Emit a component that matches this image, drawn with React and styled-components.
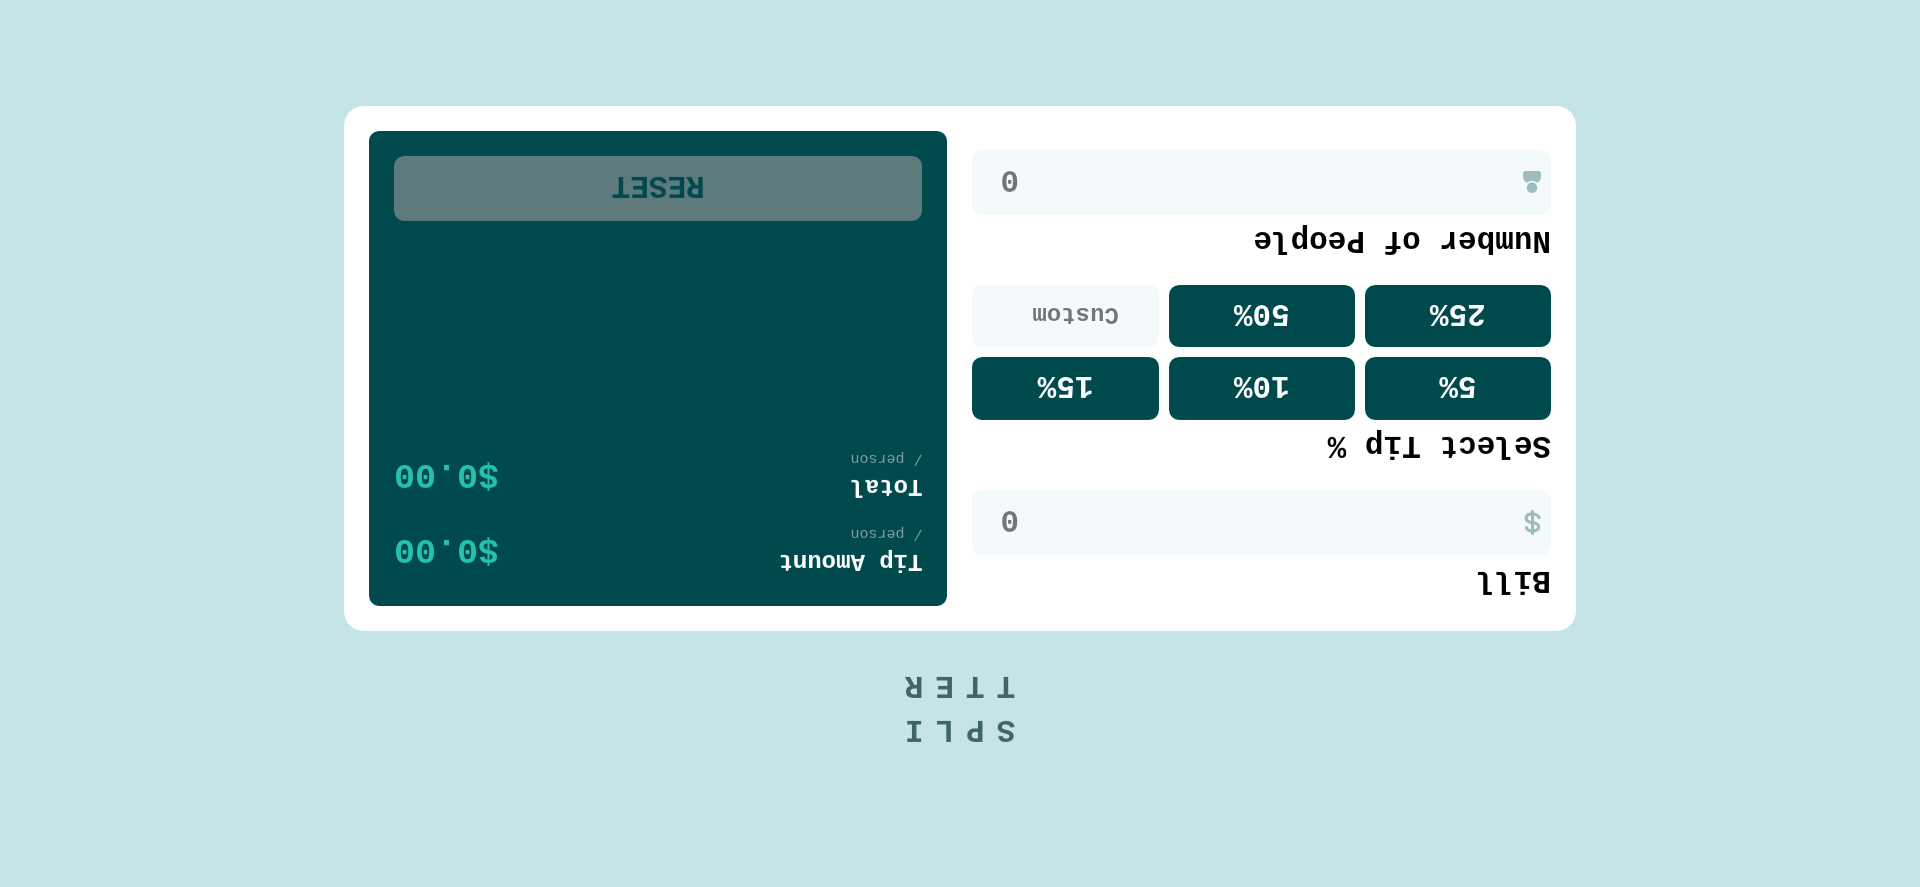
import React, { useState } from "react";
import styled, { createGlobalStyle } from "styled-components";

const GlobalStyle = createGlobalStyle`
  *, *::before, *::after { box-sizing: border-box; }
  body {
    margin: 0;
    background: #c5e4e7;
    font-family: "Liberation Mono", monospace;
    font-weight: 700;
  }
  button, input { font: inherit; }
`;

const Page = styled.main`
  min-height: 100vh;
  display: flex;
  flex-direction: column;
  align-items: center;
  justify-content: center;
  transform: rotate(180deg);
`;

const Logo = styled.h1`
  display: flex;
  flex-direction: column;
  margin: 0;
  padding: 30px 0 32px 12px;
  font-size: 31px;
  line-height: 44px;
  letter-spacing: 12px;
  color: #3d6666;
`;

const Card = styled.section`
  width: calc(100% - 48px);
  max-width: 1232px;
  display: grid;
  grid-template-columns: repeat(auto-fit, minmax(min(100%, 400px), 1fr));
  gap: 25px;
  padding: 25px;
  border-radius: 20px;
  background: #fff;
`;

const Form = styled.form`
  display: flex;
  flex-direction: column;
  gap: 19px;
  padding-bottom: 19px;
`;

const Field = styled.div`
  display: flex;
  flex-direction: column;
`;

const TipGroup = styled.fieldset`
  min-width: 0;
  margin: 0;
  padding: 0;
  border: 0;
`;

const Label = styled.label`
  display: block;
  padding: 4px 0 3px;
  font-size: 31px;
  line-height: 44px;
  color: #000;
`;

const InputBox = styled.div`
  display: flex;
  align-items: center;
  height: 65px;
  padding-left: 10px;
  border-radius: 10px;
  background: #f4fafc;

  &:focus-within { outline: 2px solid #26c0ab; }
`;

const NumberInput = styled.input`
  flex: 1;
  min-width: 0;
  height: 100%;
  padding: 6px 28px 0 0;
  border: 0;
  outline: 0;
  background: transparent;
  color: #00494d;
  font-size: 31px;
  text-align: right;

  &::placeholder { color: #757575; opacity: 1; }
`;

const TipGrid = styled.div`
  display: grid;
  grid-template-columns: repeat(3, minmax(0, 1fr));
  grid-auto-rows: 1fr;
  gap: 10px;
  min-height: 135px;
`;

const TipButton = styled.button`
  padding: 6px 0 0;
  border: 0;
  border-radius: 10px;
  background: ${({ $active }) => ($active ? "#26c0ab" : "#00494d")};
  color: #fff;
  font-size: 31px;
  cursor: pointer;
`;

const CustomInput = styled.input`
  width: 100%;
  padding: 4px 20px 0 0;
  border: 0;
  border-radius: 10px;
  background: #f4fafc;
  color: #00494d;
  font-size: 24px;
  text-align: center;

  &::placeholder { color: #757575; opacity: 1; }
`;

const Panel = styled.div`
  display: flex;
  flex-direction: column;
  gap: 15px;
  padding: 25px;
  border-radius: 10px;
  background: #00494d;
`;

const ResultRow = styled.div`
  display: flex;
  align-items: center;
  justify-content: space-between;
  padding-top: 3px;
`;

const ResultName = styled.div`
  font-size: 24px;
  line-height: 33px;
  color: #fff;
`;

const PerPerson = styled.div`
  font-size: 15px;
  font-weight: 400;
  line-height: 24px;
  color: #7f9c9f;
`;

const Amount = styled.output`
  font-size: 35px;
  line-height: 52px;
  color: #26c0ab;
`;

const ResetButton = styled.button`
  height: 65px;
  margin-top: auto;
  padding: 6px 0 0;
  border: 0;
  border-radius: 10px;
  background: ${({ disabled }) => (disabled ? "#5f7a7d" : "#26c0ab")};
  color: #00494d;
  font-size: 31px;
`;

const DollarIcon = () => (
  <svg width="17" height="25" viewBox="0 0 17 25" fill="none" stroke="#9ebbbd" aria-hidden="true">
    <path d="M8.5 0.3V24.7" strokeWidth="3" />
    <path
      d="M14.6 8.4V7.9C14.6 5.4 12.2 4 8.5 4S2.2 5.6 2.2 8.1C2.2 10.9 4.5 11.7 8.5 12.3S14.9 13.9 14.9 16.7C14.9 19.4 12.4 21 8.5 21S1.9 19.2 1.9 16.6V16"
      strokeWidth="3.1"
    />
  </svg>
);

const PersonIcon = () => (
  <svg width="18" height="22" viewBox="0 0 18 22" fill="#9ebbbd" aria-hidden="true">
    <circle cx="9" cy="5.3" r="5.3" />
    <path d="M4.2 10.2A6.8 6.8 0 0 0 13.8 10.2C16.6 11.2 18 13.6 18 16.8V19C18 21.1 17.1 22 15 22H3C.9 22 0 21.1 0 19V16.8C0 13.6 1.4 11.2 4.2 10.2Z" />
  </svg>
);

const TIPS = [5, 10, 15, 25, 50];

export default function App() {
  const [bill, setBill] = useState("");
  const [people, setPeople] = useState("");
  const [tip, setTip] = useState(null);
  const [custom, setCustom] = useState("");

  const rate = (custom ? Number(custom) : tip || 0) / 100;
  const count = Number(people);
  const base = count > 0 ? Number(bill) / count : 0;
  const money = (value) => `$${(Number.isFinite(value) ? value : 0).toFixed(2)}`;
  const untouched = !bill && !people && !custom && tip === null;

  const reset = () => {
    setBill("");
    setPeople("");
    setTip(null);
    setCustom("");
  };

  return (
    <>
      <GlobalStyle />
      <Page>
        <Logo>
          <span>SPLI</span>
          <span>TTER</span>
        </Logo>
        <Card>
          <Form onSubmit={(e) => e.preventDefault()}>
            <Field>
              <Label htmlFor="bill">Bill</Label>
              <InputBox>
                <DollarIcon />
                <NumberInput id="bill" inputMode="decimal" placeholder="0" value={bill} onChange={(e) => setBill(e.target.value)} />
              </InputBox>
            </Field>
            <TipGroup aria-labelledby="tip-label">
              <Label as="div" id="tip-label">Select Tip %</Label>
              <TipGrid>
                {TIPS.map((value) => (
                  <TipButton
                    key={value}
                    type="button"
                    $active={tip === value}
                    onClick={() => {
                      setTip(value);
                      setCustom("");
                    }}
                  >
                    {value}%
                  </TipButton>
                ))}
                <CustomInput aria-label="Custom tip" inputMode="decimal" placeholder="Custom" value={custom} onChange={(e) => setCustom(e.target.value)} />
              </TipGrid>
            </TipGroup>
            <Field>
              <Label htmlFor="people">Number of People</Label>
              <InputBox>
                <PersonIcon />
                <NumberInput id="people" inputMode="numeric" placeholder="0" value={people} onChange={(e) => setPeople(e.target.value)} />
              </InputBox>
            </Field>
          </Form>
          <Panel>
            <ResultRow>
              <div>
                <ResultName>Tip Amount</ResultName>
                <PerPerson>/ person</PerPerson>
              </div>
              <Amount>{money(base * rate)}</Amount>
            </ResultRow>
            <ResultRow>
              <div>
                <ResultName>Total</ResultName>
                <PerPerson>/ person</PerPerson>
              </div>
              <Amount>{money(base * (1 + rate))}</Amount>
            </ResultRow>
            <ResetButton type="button" disabled={untouched} onClick={reset}>RESET</ResetButton>
          </Panel>
        </Card>
      </Page>
    </>
  );
}
